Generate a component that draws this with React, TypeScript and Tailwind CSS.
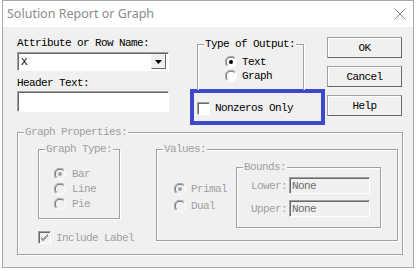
import type { ReactNode } from "react";

const mono = "font-['Liberation_Mono','DejaVu_Sans_Mono',monospace] text-[11px] leading-[12px] tracking-[-0.6px]";

function GroupBox({
  title,
  className,
  disabled,
  children,
}: {
  title: string;
  className?: string;
  disabled?: boolean;
  children?: ReactNode;
}) {
  return (
    <div
      className={`relative border border-[#a0a0a0] shadow-[inset_1px_1px_0_#fff,1px_1px_0_#fff] ${className ?? ""}`}
    >
      <span
        className={`absolute -top-[7px] left-[6px] bg-[#f0f0f0] px-[1px] whitespace-pre ${
          disabled ? "text-[#a0a0a0]" : "text-black"
        }`}
      >
        {title}
      </span>
      {children}
    </div>
  );
}

function Radio({ checked, disabled }: { checked?: boolean; disabled?: boolean }) {
  return (
    <svg width="12" height="12" viewBox="0 0 12 12" className="shrink-0">
      <circle cx="6" cy="6" r="5.5" fill={disabled ? "#f0f0f0" : "#fff"} stroke="#fff" />
      <path d="M10.2 1.8 A5.5 5.5 0 0 0 1.8 10.2" fill="none" stroke="#a0a0a0" strokeWidth="1" />
      <path d="M9.4 2.6 A4.5 4.5 0 0 0 2.6 9.4" fill="none" stroke="#696969" strokeWidth="1" />
      {checked && <circle cx="6" cy="6" r="2" fill={disabled ? "#a0a0a0" : "#000"} />}
    </svg>
  );
}

function Check({ checked, disabled }: { checked?: boolean; disabled?: boolean }) {
  return (
    <div
      className={`flex size-[13px] shrink-0 items-center justify-center border border-[#a0a0a0] border-b-white border-r-white shadow-[inset_1px_1px_0_#696969] ${
        disabled ? "bg-[#f0f0f0]" : "bg-white"
      }`}
    >
      {checked && (
        <svg width="9" height="9" viewBox="0 0 9 9">
          <path d="M1 4 L3 6 L8 1 M1 5 L3 7 L8 2 M1 6 L3 8 L8 3" fill="none" stroke={disabled ? "#a0a0a0" : "#000"} />
        </svg>
      )}
    </div>
  );
}

function Button({ label }: { label: string }) {
  return (
    <button
      type="button"
      className="flex h-[21px] w-[75px] items-center justify-center border border-[#a0a0a0] border-b-[#696969] border-r-[#696969] bg-[#f0f0f0] text-black shadow-[inset_1px_1px_0_#fff]"
    >
      {label}
    </button>
  );
}

function Sunken({ className, children }: { className?: string; children?: ReactNode }) {
  return (
    <div
      className={`flex items-center border border-[#a0a0a0] border-b-white border-r-white shadow-[inset_1px_1px_0_#696969] ${className ?? ""}`}
    >
      {children}
    </div>
  );
}

export default function App() {
  return (
    <div className="min-h-screen bg-white">
      <div className="ml-[2px] flex h-[268px] w-[412px] flex-col border border-[#a8a8a8] bg-[#f0f0f0]">
        {/* title bar */}
        <div className="flex h-[26px] items-center justify-between bg-white pl-[4px] pr-[7px]">
          <span className="font-['Noto_Sans',sans-serif] text-[12.5px] text-[#8a8a8a]">
            Solution Report or Graph
          </span>
          <svg width="12" height="12" viewBox="0 0 12 12">
            <path d="M0.5 0.5 L11.5 11.5 M11.5 0.5 L0.5 11.5" stroke="#8a8a8a" strokeWidth="1" />
          </svg>
        </div>

        <div className={mono}>
          <div className="flex pl-[14px]">
            {/* left column */}
            <div className="w-[152px] pt-[10px]">
              <div>Attribute or Row Name:</div>
              <Sunken className="mt-[3px] h-[19px] bg-white pl-[3px] pr-[2px]">
                <span className="flex-1">X</span>
                <div className="flex h-[15px] w-[15px] items-center justify-center border border-[#f0f0f0] border-b-[#696969] border-r-[#696969] bg-[#f0f0f0]">
                  <svg width="7" height="4" viewBox="0 0 7 4">
                    <path d="M0 0 H7 L3.5 4 Z" fill="#000" />
                  </svg>
                </div>
              </Sunken>
              <div className="mt-[6px]">Header Text:</div>
              <Sunken className="mt-[2px] h-[21px] bg-white" />
            </div>

            {/* output type */}
            <div className="ml-[21px] w-[135px] pt-[17px]">
              <GroupBox title="Type of Output:" className="ml-[7px] h-[46px] w-[107px] !border-b-0 !shadow-[inset_1px_1px_0_#fff,1px_0_0_#fff]">
                <div className="flex flex-col pl-[27px] pt-[10px]">
                  <div className="flex h-[14px] items-center gap-[5px]">
                    <Radio checked />
                    <span>Text</span>
                  </div>
                  <div className="flex h-[14px] items-center gap-[5px]">
                    <Radio />
                    <span>Graph</span>
                  </div>
                </div>
              </GroupBox>
              <div className="-mt-[1px] flex h-[36px] w-[135px] items-center gap-[5px] border-4 border-[#3f48cc] pl-[3px] pt-[2px]">
                <Check />
                <span>Nonzeros Only</span>
              </div>
            </div>

            {/* buttons */}
            <div className="ml-[2px] flex flex-col gap-[8px] pt-[10px]">
              <Button label="OK" />
              <Button label="Cancel" />
              <Button label="Help" />
            </div>
          </div>

          {/* graph properties */}
          <GroupBox disabled title="Graph Properties:" className="ml-[14px] mt-[7px] h-[123px] w-[386px] text-[#a0a0a0]">
            <div className="flex pl-[20px] pt-[16px]">
              <div className="flex flex-col">
                <GroupBox disabled title="Graph Type:" className="h-[70px] w-[82px]">
                  <div className="flex flex-col pl-[15px] pt-[16px]">
                    <div className="flex h-[15px] items-center gap-[6px]">
                      <Radio checked disabled />
                      <span>Bar</span>
                    </div>
                    <div className="flex h-[15px] items-center gap-[6px]">
                      <Radio disabled />
                      <span>Line</span>
                    </div>
                    <div className="flex h-[15px] items-center gap-[6px]">
                      <Radio disabled />
                      <span>Pie</span>
                    </div>
                  </div>
                </GroupBox>
                <div className="mt-[12px] flex items-center gap-[5px]">
                  <Check checked disabled />
                  <span>Include Label</span>
                </div>
              </div>

              <GroupBox disabled title="Values:" className="ml-[22px] flex h-[92px] w-[242px]">
                <div className="flex w-[79px] flex-col pl-[17px] pt-[30px]">
                  <div className="flex h-[17px] items-center gap-[5px]">
                    <Radio checked disabled />
                    <span>Primal</span>
                  </div>
                  <div className="flex h-[17px] items-center gap-[5px]">
                    <Radio disabled />
                    <span>Dual</span>
                  </div>
                </div>
                <GroupBox disabled title="Bounds:" className="mt-[17px] h-[61px] w-[145px]">
                  <div className="flex flex-col gap-[6px] pl-[14px] pt-[9px]">
                    <div className="flex items-center gap-[2px]">
                      <span className="w-[36px]">Lower:</span>
                      <Sunken className="h-[17px] w-[81px] bg-[#f0f0f0] pl-[2px] text-[#6d6d6d]">None</Sunken>
                    </div>
                    <div className="flex items-center gap-[2px]">
                      <span className="w-[36px]">Upper:</span>
                      <Sunken className="h-[17px] w-[81px] bg-[#f0f0f0] pl-[2px] text-[#6d6d6d]">None</Sunken>
                    </div>
                  </div>
                </GroupBox>
              </GroupBox>
            </div>
          </GroupBox>
        </div>
      </div>
    </div>
  );
}
